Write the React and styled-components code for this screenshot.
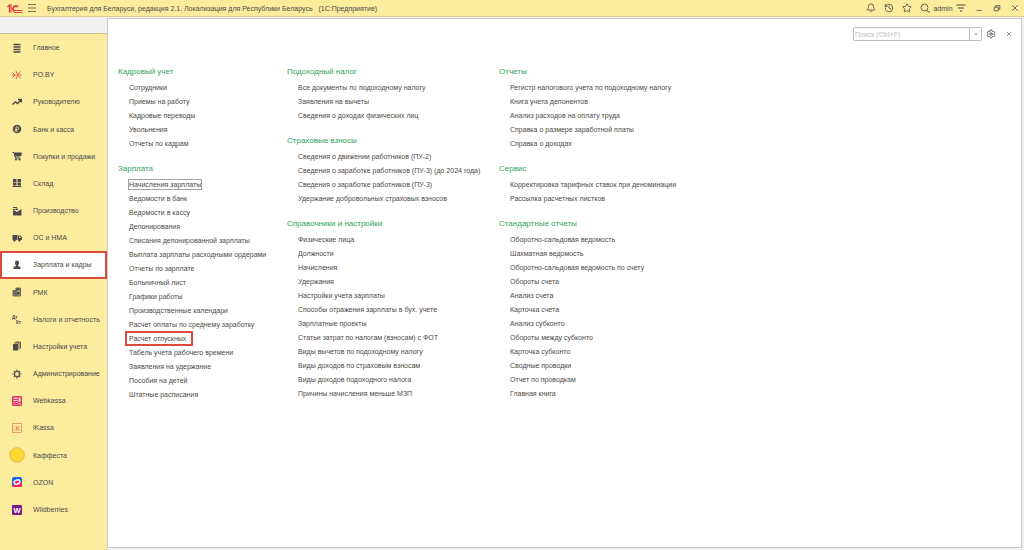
import React from 'react';
import styled, { createGlobalStyle, css } from 'styled-components';
import { Bell, History, Star, Settings } from 'lucide-react';

const colors = {
  yellow: '#fbec9e',
  line: '#c9c9c9',
  text: '#4d4a48',
  green: '#2fa35f',
  red: '#dc4a3d',
};

const GlobalStyle = createGlobalStyle`
  * {
    box-sizing: border-box;
  }
  body {
    margin: 0;
    background: #f1f1f1;
    color: ${colors.text};
    font-family: 'Liberation Sans', Arial, sans-serif;
    font-size: 7px;
  }
  button, input {
    font: inherit;
    color: inherit;
  }
  a {
    color: inherit;
    text-decoration: none;
  }
  ul {
    margin: 0;
    padding: 0;
    list-style: none;
  }
`;

const Window = styled.div`
  display: flex;
  flex-direction: column;
  min-height: 100vh;
`;

const TitleBar = styled.header`
  display: flex;
  align-items: center;
  height: 17px;
  padding-left: 7px;
  background: ${colors.yellow};
  border-bottom: 1px solid #d8cf9c;
`;

const IconButton = styled.button`
  display: flex;
  align-items: center;
  justify-content: center;
  width: 18px;
  height: 14px;
  padding: 0;
  border: 0;
  background: none;
`;

const AppTitle = styled.h1`
  flex: 1;
  margin: 0 0 0 6px;
  font-size: 7px;
  font-weight: 400;
  white-space: pre;
`;

const Workspace = styled.div`
  display: flex;
  flex: 1;
`;

const Sidebar = styled.aside`
  display: flex;
  flex-direction: column;
  width: 107px;
  padding-top: 16px;
`;

const Nav = styled.nav`
  display: flex;
  flex: 1;
  flex-direction: column;
  padding-bottom: 27px;
  background: ${colors.yellow};
  border-top: 1px solid #c9c08f;
`;

const NavItem = styled.a`
  display: flex;
  flex: 1;
  align-items: center;
  min-height: 27px;
  white-space: nowrap;
  ${({ $active }) =>
    $active &&
    css`
      background: #fff;
      box-shadow: inset 0 0 0 2px ${colors.red};
    `}
`;

const NavIcon = styled.span`
  display: flex;
  justify-content: center;
  width: 33px;
`;

const Panel = styled.main`
  flex: 1;
  margin: 1px 2px 2px 0;
  background: #fff;
  border: 1px solid ${colors.line};
`;

const Tools = styled.div`
  display: flex;
  align-items: center;
  justify-content: flex-end;
  padding: 8px 3px 0 0;
`;

const SearchBox = styled.div`
  display: flex;
  width: 129px;
  height: 14px;
  border: 1px solid #bdbdbd;
  border-radius: 2px;
`;

const SearchInput = styled.input`
  flex: 1;
  min-width: 0;
  padding: 0 1px;
  border: 0;
  outline: 0;
  background: none;
  &::placeholder {
    color: #c4c2bb;
    opacity: 1;
  }
`;

const ClearButton = styled.button`
  display: flex;
  align-items: center;
  justify-content: center;
  width: 12px;
  padding: 0;
  border: 0;
  border-left: 1px solid #bdbdbd;
  background: none;
`;

const Columns = styled.div`
  display: grid;
  grid-template-columns: 169px 212px 1fr;
  padding: 23px 10px 0;
`;

const Section = styled.section`
  margin-bottom: 11px;
`;

const SectionTitle = styled.h2`
  margin: 0;
  color: ${colors.green};
  font-size: 8px;
  font-weight: 400;
  line-height: 16px;
`;

const MenuRow = styled.li`
  display: flex;
  align-items: center;
  height: 14px;
  padding-left: 8px;
  white-space: nowrap;
`;

const MenuLink = styled.a`
  padding: 2px 4px 2px 3px;
  ${({ $focused }) =>
    $focused &&
    css`
      padding: 1px 0;
      margin: 0 3px;
      outline: 1px solid #a3a3a3;
    `}
  ${({ $marked }) =>
    $marked &&
    css`
      padding: 3px 6px 3px 3px;
      outline: 2px solid ${colors.red};
      outline-offset: -1px;
    `}
`;

const Svg = ({ size = 10, children, ...rest }) => (
  <svg
    width={size}
    height={size}
    viewBox="0 0 20 20"
    fill="none"
    stroke="currentColor"
    strokeWidth="2"
    aria-hidden="true"
    {...rest}
  >
    {children}
  </svg>
);

const Logo = () => (
  <svg width="16" height="11" viewBox="0 0 32 22" fill="none" stroke="#e0393a" strokeWidth="2.2" aria-label="1C">
    <path d="M1 8l4-4v15M5 4h3v15" />
    <path d="M23 7a7 7 0 1 0-6 12h14" />
    <path d="M20 9a4 4 0 1 0-3 6h14" />
  </svg>
);

const Cross = ({ size = 8 }) => (
  <Svg size={size}>
    <path d="M3 3l14 14M17 3L3 17" />
  </Svg>
);

const icons = {
  list: <Svg><path d="M3 3h14M3 8h14M3 13h14M3 18h14" strokeWidth="2.8" /></Svg>,
  spark: (
    <Svg stroke="#e2504a" strokeWidth="1.8">
      <path d="M11 10h8M11 10L8 2M11 10l6-7M11 10l-3 8M11 10l6 7" />
      <path d="M6 10L1 5M6 10l-5 5M0 10h8" />
    </Svg>
  ),
  trend: <Svg><path d="M1 15l6-5 4 3 7-7M12 5h7v6" strokeWidth="2.8" /></Svg>,
  ruble: (
    <Svg>
      <circle cx="10" cy="10" r="8.5" fill="currentColor" stroke="none" />
      <path d="M8 16V6h3a2.5 2.5 0 0 1 0 5H6M6 14h6" stroke={colors.yellow} strokeWidth="1.6" />
    </Svg>
  ),
  cart: (
    <Svg>
      <path d="M1 3h3l3 11h10" />
      <path d="M5 4h14l-2 6H6z" fill="currentColor" />
      <circle cx="8" cy="17" r="1.3" fill="currentColor" />
      <circle cx="15" cy="17" r="1.3" fill="currentColor" />
    </Svg>
  ),
  store: (
    <Svg>
      <path d="M2 2h7v6H2zM11 2h7v6h-7zM2 9h7v6H2zM11 9h7v6h-7z" fill="currentColor" stroke="none" />
      <path d="M1 17h18" />
    </Svg>
  ),
  factory: (
    <Svg fill="currentColor" stroke="none">
      <path d="M2 19V9h4l4 3 4-3 5-3v13zM2 6h4v2H2zM2 2h8v2H2zM7 5h5v3H7z" />
    </Svg>
  ),
  truck: (
    <Svg>
      <path d="M1 4h10v10H1zM12 5h5l3 4v5h-8z" fill="currentColor" stroke="none" />
      <path d="M14 7h2l2 3h-4z" fill={colors.yellow} stroke="none" />
      <circle cx="5" cy="15" r="1.5" fill="currentColor" />
      <circle cx="15" cy="15" r="1.5" fill="currentColor" />
    </Svg>
  ),
  person: (
    <Svg fill="currentColor" stroke="none">
      <path d="M6 5a4 4 0 0 1 8 0c0 3-1 5-2 6v1l5 2v4H3v-4l5-2v-1C7 10 6 8 6 5z" />
    </Svg>
  ),
  register: (
    <Svg>
      <path d="M2 7h6v11H2zM8 2h9v16H8z" fill="#b9ad79" strokeWidth="1.6" />
      <path d="M3 9h4v2H3zM3 13h4v2H3zM9 3h6v4H9zM10 10h5v5h-5z" fill="currentColor" stroke="none" />
    </Svg>
  ),
  debit: (
    <Svg fill="currentColor" stroke="none" fontSize="9" fontWeight="700">
      <text x="0" y="9">Дт</text>
      <text x="8" y="19">Кт</text>
    </Svg>
  ),
  books: (
    <Svg>
      <path d="M2 6h10v13H2z" fill="currentColor" stroke="none" />
      <path d="M4 4h10v13M7 2h10v13" strokeWidth="1.8" />
    </Svg>
  ),
  gear: (
    <Svg>
      <circle cx="10" cy="10" r="5" strokeWidth="2.4" />
      <path d="M10 1v4M10 15v4M1 10h4M15 10h4M4 4l2 2M14 14l2 2M16 4l-2 2M4 16l2-2" strokeWidth="2.4" />
    </Svg>
  ),
  webkassa: (
    <Svg stroke="none">
      <rect width="20" height="20" rx="2" fill="#ea3560" />
      <path d="M3 3h8v3H3zM3 8h8v2H3zM3 12h3v2H3zM8 12h3v2H8zM3 16h8v1H3zM13 3h4v9h-4zM13 14h4v3h-4z" fill="#fbd3da" />
    </Svg>
  ),
  ikassa: (
    <Svg stroke="#e08a5c" strokeWidth="1.6">
      <rect x="1" y="1" width="18" height="18" />
      <path d="M4 4v2M4 8v2M4 12v4" />
      <text x="7" y="15" fontSize="14" fill="#dd6a42" stroke="none">K</text>
    </Svg>
  ),
  coffee: (
    <Svg size={16} stroke="#e3b95c" strokeWidth="1.2">
      <circle cx="10" cy="10" r="9.2" fill="#ffe03a" />
      <circle cx="10" cy="10" r="7.4" fill="#fddb2e" stroke="#f3cb36" />
    </Svg>
  ),
  ozon: (
    <Svg stroke="none">
      <rect width="20" height="20" rx="4" fill="#1762f0" />
      <path d="M0 15c6 3 14 0 20-6v7a4 4 0 0 1-4 4H4a4 4 0 0 1-4-4z" fill="#f5225f" />
      <ellipse cx="10" cy="10" rx="6" ry="4" fill="#f5225f" stroke="#fff" strokeWidth="3" transform="rotate(-20 10 10)" />
    </Svg>
  ),
  wildberries: (
    <Svg stroke="none">
      <rect width="20" height="20" rx="2" fill="#7b1a8c" />
      <text x="10" y="15" fontSize="15" fontWeight="700" textAnchor="middle" fill="#fff">W</text>
    </Svg>
  ),
};

const navItems = [
  ['list', 'Главное'],
  ['spark', 'PO.BY'],
  ['trend', 'Руководителю'],
  ['ruble', 'Банк и касса'],
  ['cart', 'Покупки и продажи'],
  ['store', 'Склад'],
  ['factory', 'Производство'],
  ['truck', 'ОС и НМА'],
  ['person', 'Зарплата и кадры'],
  ['register', 'РМК'],
  ['debit', 'Налоги и отчетность'],
  ['books', 'Настройки учета'],
  ['gear', 'Администрирование'],
  ['webkassa', 'Webkassa'],
  ['ikassa', 'iKassa'],
  ['coffee', 'Каффеста'],
  ['ozon', 'OZON'],
  ['wildberries', 'Wildberries'],
];

const columns = [
  [
    {
      title: 'Кадровый учет',
      links: ['Сотрудники', 'Приемы на работу', 'Кадровые переводы', 'Увольнения', 'Отчеты по кадрам'],
    },
    {
      title: 'Зарплата',
      links: [
        'Начисления зарплаты',
        'Ведомости в банк',
        'Ведомости в кассу',
        'Депонирования',
        'Списания депонированной зарплаты',
        'Выплата зарплаты расходными ордерами',
        'Отчеты по зарплате',
        'Больничный лист',
        'Графики работы',
        'Производственные календари',
        'Расчет оплаты по среднему заработку',
        'Расчет отпускных',
        'Табель учета рабочего времени',
        'Заявления на удержание',
        'Пособия на детей',
        'Штатные расписания',
      ],
    },
  ],
  [
    {
      title: 'Подоходный налог',
      links: ['Все документы по подоходному налогу', 'Заявления на вычеты', 'Сведения о доходах физических лиц'],
    },
    {
      title: 'Страховые взносы',
      links: [
        'Сведения о движении работников (ПУ-2)',
        'Сведения о заработке работников (ПУ-3) (до 2024 года)',
        'Сведения о заработке работников (ПУ-3)',
        'Удержание добровольных страховых взносов',
      ],
    },
    {
      title: 'Справочники и настройки',
      links: [
        'Физические лица',
        'Должности',
        'Начисления',
        'Удержания',
        'Настройки учета зарплаты',
        'Способы отражения зарплаты в бух. учете',
        'Зарплатные проекты',
        'Статьи затрат по налогам (взносам) с ФОТ',
        'Виды вычетов по подоходному налогу',
        'Виды доходов по страховым взносам',
        'Виды доходов подоходного налога',
        'Причины начисления меньше МЗП',
      ],
    },
  ],
  [
    {
      title: 'Отчеты',
      links: [
        'Регистр налогового учета по подоходному налогу',
        'Книга учета депонентов',
        'Анализ расходов на оплату труда',
        'Справка о размере заработной платы',
        'Справка о доходах',
      ],
    },
    {
      title: 'Сервис',
      links: ['Корректировка тарифных ставок при деноминации', 'Рассылка расчетных листков'],
    },
    {
      title: 'Стандартные отчеты',
      links: [
        'Оборотно-сальдовая ведомость',
        'Шахматная ведомость',
        'Оборотно-сальдовая ведомость по счету',
        'Обороты счета',
        'Анализ счета',
        'Карточка счета',
        'Анализ субконто',
        'Обороты между субконто',
        'Карточка субконто',
        'Сводные проводки',
        'Отчет по проводкам',
        'Главная книга',
      ],
    },
  ],
];

const Header = () => (
  <TitleBar>
    <Logo />
    <IconButton aria-label="Меню">
      <Svg><path d="M2 3h16M2 10h16M2 17h16" strokeWidth="1.6" /></Svg>
    </IconButton>
    <AppTitle>{'Бухгалтерия для Беларуси, редакция 2.1. Локализация для Республики Беларусь   (1С:Предприятие)'}</AppTitle>
    <IconButton aria-label="Уведомления"><Bell size={10} /></IconButton>
    <IconButton aria-label="История"><History size={10} /></IconButton>
    <IconButton aria-label="Избранное"><Star size={10} /></IconButton>
    <IconButton aria-label="Поиск">
      <Svg><circle cx="9" cy="9" r="7" strokeWidth="1.6" /><path d="M13 14l4 4h3" /></Svg>
    </IconButton>
    <IconButton>admin</IconButton>
    <IconButton aria-label="Настройки">
      <Svg><path d="M1 4h18M4 10h12" /><path d="M7 15h6l-3 3z" fill="currentColor" stroke="none" /></Svg>
    </IconButton>
    <IconButton aria-label="Свернуть"><Svg size={8}><path d="M4 16h13" /></Svg></IconButton>
    <IconButton aria-label="Восстановить">
      <Svg size={8}><path d="M3 8h10v9H3zM7 8V4h10v9h-4" /></Svg>
    </IconButton>
    <IconButton aria-label="Закрыть"><Cross /></IconButton>
  </TitleBar>
);

const MenuSection = ({ title, links }) => (
  <Section>
    <SectionTitle>{title}</SectionTitle>
    <ul>
      {links.map(link => (
        <MenuRow key={link}>
          <MenuLink
            href="#"
            $focused={link === 'Начисления зарплаты'}
            $marked={link === 'Расчет отпускных'}
          >
            {link}
          </MenuLink>
        </MenuRow>
      ))}
    </ul>
  </Section>
);

const App = () => (
  <Window>
    <GlobalStyle />
    <Header />
    <Workspace>
      <Sidebar>
        <Nav>
          {navItems.map(([icon, label]) => (
            <NavItem key={label} href="#" $active={icon === 'person'}>
              <NavIcon>{icons[icon]}</NavIcon>
              {label}
            </NavItem>
          ))}
        </Nav>
      </Sidebar>
      <Panel>
        <Tools>
          <SearchBox>
            <SearchInput type="text" aria-label="Поиск" placeholder="Поиск (Ctrl+F)" />
            <ClearButton aria-label="Очистить"><Cross size={4} /></ClearButton>
          </SearchBox>
          <IconButton aria-label="Настройка"><Settings size={10} /></IconButton>
          <IconButton aria-label="Закрыть панель"><Cross size={6} /></IconButton>
        </Tools>
        <Columns>
          {columns.map(sections => (
            <div key={sections[0].title}>
              {sections.map(section => (
                <MenuSection key={section.title} {...section} />
              ))}
            </div>
          ))}
        </Columns>
      </Panel>
    </Workspace>
  </Window>
);

export default App;
